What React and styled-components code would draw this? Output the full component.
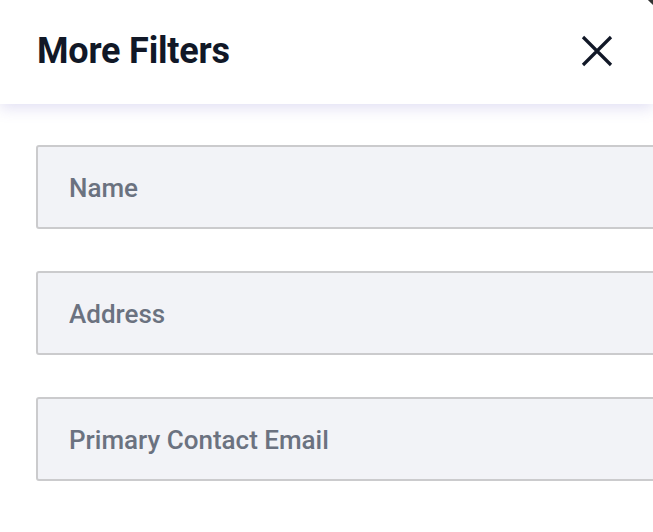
import React from "react";
import styled, { createGlobalStyle } from "styled-components";

const GlobalStyle = createGlobalStyle`
  html, body {
    margin: 0;
    padding: 0;
    background: #ffffff;
    overflow: hidden;
  }
  body {
    font-family: Roboto, "Liberation Sans", sans-serif;
  }
`;

const Panel = styled.div`
  position: relative;
  width: 653px;
  height: 532px;
  background: #ffffff;
  overflow: hidden;
`;

const Header = styled.div`
  position: relative;
  z-index: 1;
  height: 104px;
  padding: 0 38px 2px 37px;
  box-sizing: border-box;
  display: flex;
  align-items: center;
  justify-content: space-between;
  background: #ffffff;
  box-shadow: 0 4px 14px rgba(120, 110, 200, 0.22);
`;

const Title = styled.h2`
  margin: 0;
  font-size: 36px;
  font-weight: 700;
  color: #111827;
  letter-spacing: -0.2px;
`;

const CloseButton = styled.button`
  border: none;
  background: none;
  padding: 0;
  margin-right: 2px;
  width: 32px;
  height: 32px;
  display: flex;
  align-items: center;
  justify-content: center;
  cursor: pointer;
  color: #111827;
`;

const Corner = styled.div`
  position: absolute;
  top: -6px;
  right: -6px;
  width: 10px;
  height: 10px;
  background: #333;
  transform: rotate(45deg);
  z-index: 2;
`;

const Form = styled.div`
  display: flex;
  flex-direction: column;
  gap: 42px;
  padding: 41px 0 0 36px;
`;

const Field = styled.input`
  width: 640px;
  height: 84px;
  box-sizing: border-box;
  border: 2px solid #cbcbcd;
  border-radius: 3px;
  background: #f2f3f7;
  padding: 2px 0 0 31px;
  font-family: Roboto, "Liberation Sans", sans-serif;
  font-size: 26px;
  font-weight: 500;
  color: #111827;
  outline: none;

  &::placeholder {
    color: #6b7280;
  }
`;

export default function App() {
  const fields = ["Name", "Address", "Primary Contact Email"];

  return (
    <>
      <GlobalStyle />
      <Panel>
        <Header>
          <Title>More Filters</Title>
          <CloseButton aria-label="Close">
            <svg width="32" height="32" viewBox="0 0 32 32" fill="none">
              <path
                d="M2 2 L30 30 M30 2 L2 30"
                stroke="currentColor"
                strokeWidth="3.2"
              />
            </svg>
          </CloseButton>
          <Corner />
        </Header>
        <Form>
          {fields.map((f) => (
            <Field key={f} placeholder={f} />
          ))}
        </Form>
      </Panel>
    </>
  );
}
